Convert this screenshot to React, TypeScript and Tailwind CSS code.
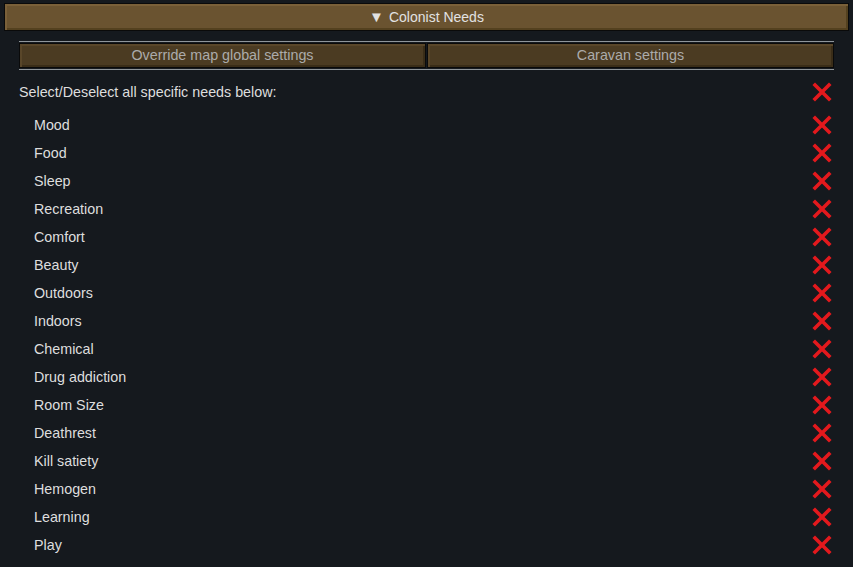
import React from "react";

const needs = [
  "Mood",
  "Food",
  "Sleep",
  "Recreation",
  "Comfort",
  "Beauty",
  "Outdoors",
  "Indoors",
  "Chemical",
  "Drug addiction",
  "Room Size",
  "Deathrest",
  "Kill satiety",
  "Hemogen",
  "Learning",
  "Play",
];

function RedX() {
  return (
    <svg width="20" height="20" viewBox="0 0 20 20" className="shrink-0">
      <path d="M3 3 L17 17 M17 3 L3 17" stroke="#e3191d" strokeWidth="3.6" strokeLinecap="square" />
    </svg>
  );
}

function NeedRow({ label, indent }: { label: string; indent?: boolean }) {
  return (
    <div className="flex h-[28px] items-center justify-between pr-[2px]">
      <span className={indent ? "pt-[2px] pl-[15px]" : "pt-[2px]"}>{label}</span>
      <RedX />
    </div>
  );
}

export default function App() {
  return (
    <div
      className="h-[567px] w-[853px] overflow-hidden bg-[#15191e] pt-[3px] text-[14.3px] text-[#dedede]"
      style={{ fontFamily: '"Liberation Sans", Arial, sans-serif' }}
    >
      <div className="mx-[4px] flex h-[28px] items-center justify-center border border-[#0a0a0a] bg-[#6a5330] text-[14px] text-[#e2e2e2] shadow-[inset_2px_2px_0_#7a6039,inset_-2px_-2px_0_#54411f]">
        <span className="mr-[5px] text-[15px]">▼</span>Colonist Needs
      </div>

      <div className="mx-[19px] mt-[10px]">
        <div className="h-px bg-[#8f959a]" />
        <div className="mt-[1px] flex h-[25px] gap-[1px] text-[#ababab]">
          <button className="flex flex-1 items-center justify-center border border-[#0a0a0a] bg-[#4b3b22] shadow-[inset_2px_2px_0_#594629,inset_-2px_-2px_0_#3a2d18]">
            Override map global settings
          </button>
          <button className="flex flex-1 items-center justify-center border border-[#0a0a0a] bg-[#4b3b22] shadow-[inset_2px_2px_0_#594629,inset_-2px_-2px_0_#3a2d18]">
            Caravan settings
          </button>
        </div>
        <div className="mt-[1px] h-px bg-[#8f959a]" />

        <div className="mt-[8px]">
          <NeedRow label="Select/Deselect all specific needs below:" />
        </div>
        <div className="mt-[5px] flex flex-col">
          {needs.map((n) => (
            <NeedRow key={n} label={n} indent />
          ))}
        </div>
      </div>
    </div>
  );
}
